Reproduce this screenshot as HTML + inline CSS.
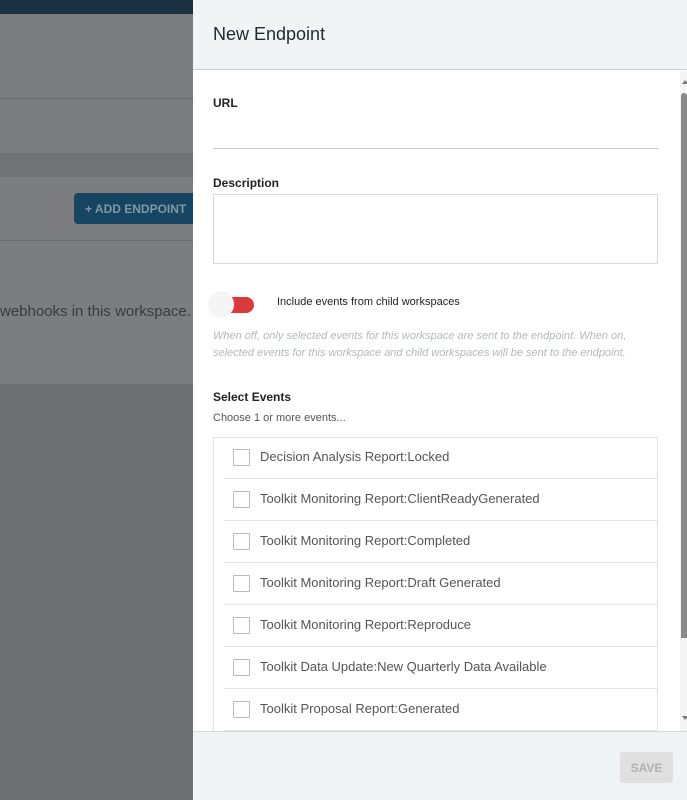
<!DOCTYPE html>
<html><head><meta charset="utf-8"><style>
*{box-sizing:border-box;margin:0;padding:0}
body{width:687px;height:800px;overflow:hidden;position:relative;font-family:"Liberation Sans",sans-serif;background:#7c7d7f}
.bg{position:absolute;left:0;top:0;width:193px;height:800px}
.panel{position:absolute;left:193px;top:0;width:494px;height:800px;background:#fff}
.hdr{height:70px;background:#f0f4f5;border-bottom:1px solid #c9cdd0;padding:24px 0 0 20px;font-size:18px;color:#1d2a33}
.lbl{position:absolute;left:20px;font-size:12px;font-weight:bold;color:#222}
.row{position:absolute;left:31px;width:433px;height:42px;border-bottom:1px solid #e6e6e6;font-size:13px;color:#555;padding:12px 0 0 36px}
.cb{position:absolute;left:9px;top:12px;width:17px;height:17px;border:1px solid #bbb;border-radius:1px}
</style></head><body>
<div class="bg">
<div style="position:absolute;left:0;top:0;width:193px;height:14px;background:#1a2f3f"></div>
<div style="position:absolute;left:0;top:98px;width:193px;height:1px;background:#6a6b6d"></div>
<div style="position:absolute;left:0;top:153px;width:193px;height:24px;background:#717274"></div>
<div style="position:absolute;left:74px;top:193px;width:125px;height:31px;background:#154560;border-radius:4px;color:#7f97a6;font-size:12px;font-weight:bold;padding:9px 0 0 11px">+ ADD ENDPOINT</div>
<div style="position:absolute;left:0;top:240px;width:193px;height:1px;background:#6a6b6d"></div>
<div style="position:absolute;left:0;top:303px;font-size:15px;color:#3a3b3d;white-space:nowrap">webhooks in this workspace.</div>
<div style="position:absolute;left:0;top:384px;width:193px;height:416px;background:#6f7072"></div>
</div>
<div class="panel">
<div class="hdr">New Endpoint</div>
<div class="lbl" style="top:96px">URL</div>
<div style="position:absolute;left:20px;top:148px;width:445px;height:1px;background:#c8c8c8"></div>
<div class="lbl" style="top:176px">Description</div>
<div style="position:absolute;left:20px;top:194px;width:445px;height:70px;border:1px solid #d9d9d9"></div>
<div style="position:absolute;left:30px;top:297px;width:31px;height:16px;background:#db3a3a;border-radius:8px"></div>
<div style="position:absolute;left:16px;top:292px;width:25px;height:25px;background:#f5f5f5;border-radius:50%;box-shadow:0 0 1px #ccc"></div>
<div style="position:absolute;left:84px;top:296px;font-size:11px;color:#222">Include events from child workspaces</div>
<div style="position:absolute;left:20px;top:328px;width:430px;font-size:11px;font-style:italic;color:#b3b8bb;line-height:17px">When off, only selected events for this workspace are sent to the endpoint. When on, selected events for this workspace and child workspaces will be sent to the endpoint.</div>
<div class="lbl" style="top:390px">Select Events</div>
<div style="position:absolute;left:20px;top:412px;font-size:11px;color:#555">Choose 1 or more events...</div>
<div style="position:absolute;left:20px;top:437px;width:445px;height:300px;border:1px solid #e2e2e2"></div>
<div class="row" style="top:437px"><div class="cb"></div>Decision Analysis Report:Locked</div>
<div class="row" style="top:479px"><div class="cb"></div>Toolkit Monitoring Report:ClientReadyGenerated</div>
<div class="row" style="top:521px"><div class="cb"></div>Toolkit Monitoring Report:Completed</div>
<div class="row" style="top:563px"><div class="cb"></div>Toolkit Monitoring Report:Draft Generated</div>
<div class="row" style="top:605px"><div class="cb"></div>Toolkit Monitoring Report:Reproduce</div>
<div class="row" style="top:647px"><div class="cb"></div>Toolkit Data Update:New Quarterly Data Available</div>
<div class="row" style="top:689px"><div class="cb"></div>Toolkit Proposal Report:Generated</div>
<div style="position:absolute;left:487px;top:71px;width:7px;height:660px;background:#f5f5f5"></div>
<div style="position:absolute;left:488px;top:93px;width:6px;height:545px;background:#8a8a8a;border-radius:3px 3px 0 0"></div>
<div style="position:absolute;left:489px;top:80px;width:0;height:0;border-left:3px solid transparent;border-right:3px solid transparent;border-bottom:4px solid #777"></div>
<div style="position:absolute;left:489px;top:716px;width:0;height:0;border-left:3px solid transparent;border-right:3px solid transparent;border-top:4px solid #777"></div>
<div style="position:absolute;left:0;top:731px;width:494px;height:69px;background:#f0f4f5;border-top:1px solid #d5d9db"></div>
<div style="position:absolute;left:427px;top:752px;width:53px;height:31px;background:#e0e0e0;border-radius:3px;color:#b0b0b0;font-size:12px;font-weight:bold;text-align:center;padding-top:9px">SAVE</div>
</div>
</body></html>
